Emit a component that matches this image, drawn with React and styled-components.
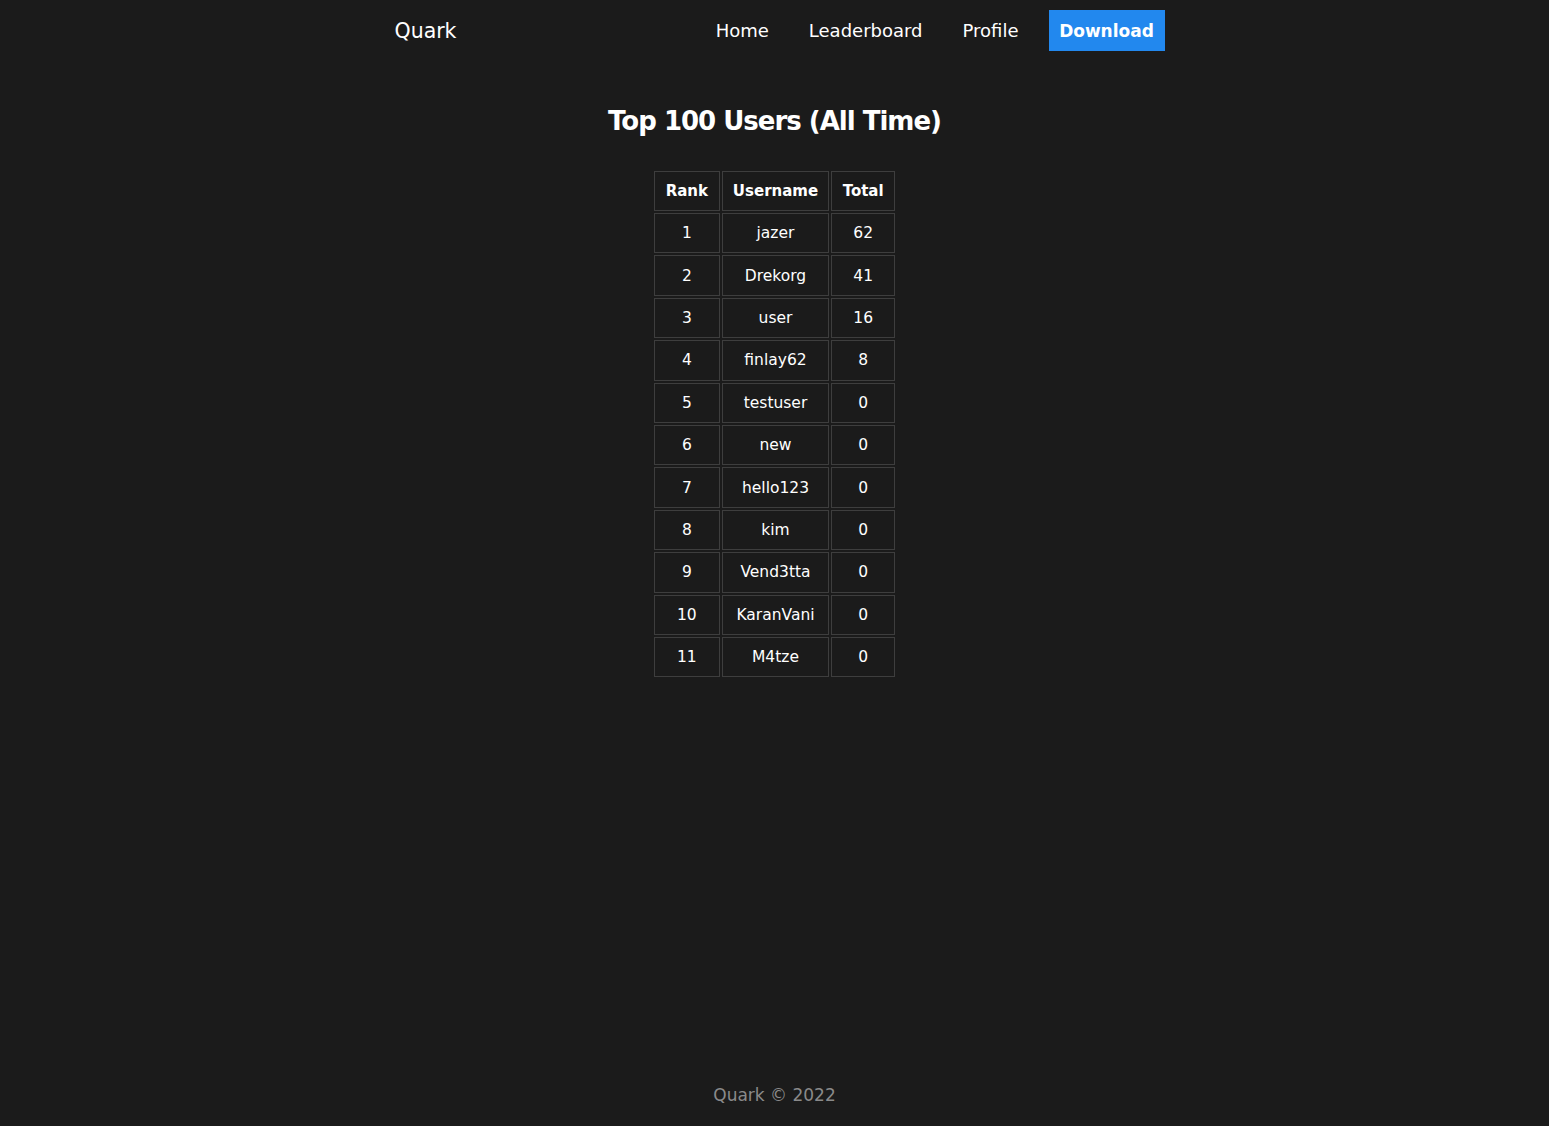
import React from "react";
import styled, { createGlobalStyle } from "styled-components";

const Global = createGlobalStyle`
  html, body { margin: 0; padding: 0; background: #1b1b1b; }
  body { font-family: "DejaVu Sans", "Noto Sans", sans-serif; color: #fff; }
  * { box-sizing: border-box; }
`;

const Page = styled.div`
  min-height: 100vh;
  display: flex;
  flex-direction: column;
`;

const Nav = styled.nav`
  width: 780px;
  margin: 0 auto;
  padding-left: 10px;
  display: flex;
  align-items: center;
  justify-content: space-between;
  height: 61px;
`;

const Brand = styled.a`
  font-size: 20.5px;
  color: #fff;
  text-decoration: none;
`;

const Links = styled.div`
  display: flex;
  align-items: center;
  height: 41px;
`;

const NavLink = styled.a`
  font-size: 18px;
  color: #fff;
  text-decoration: none;
  padding: 0 20px;
`;

const DownloadBtn = styled.a`
  margin-left: 10px;
  height: 41px;
  width: 116px;
  display: flex;
  align-items: center;
  justify-content: center;
  background: #2288ee;
  color: #fff;
  font-weight: bold;
  font-size: 17px;
  text-decoration: none;
`;

const Main = styled.main`
  flex: 1;
  display: flex;
  flex-direction: column;
  align-items: center;
`;

const Title = styled.h1`
  font-size: 26px;
  letter-spacing: -1px;
  font-weight: bold;
  margin: 40px 0 28px;
  line-height: 40px;
`;

const Table = styled.table`
  border-collapse: separate;
  border-spacing: 2px;
`;

const Th = styled.th`
  border: 1px solid #3e3e3e;
  padding: 0 10px;
  height: 40px;
  font-size: 15px;
  font-weight: bold;
  text-align: center;
`;

const Td = styled.td`
  border: 1px solid #3e3e3e;
  padding: 0 10px;
  height: 40.4px;
  font-size: 15.5px;
  text-align: center;
  width: ${(p) => p.$w}px;
`;

const Footer = styled.footer`
  text-align: center;
  color: #8a8a8a;
  font-size: 17px;
  padding: 20px 0 21px;
`;

const rows = [
  ["1", "jazer", "62"],
  ["2", "Drekorg", "41"],
  ["3", "user", "16"],
  ["4", "finlay62", "8"],
  ["5", "testuser", "0"],
  ["6", "new", "0"],
  ["7", "hello123", "0"],
  ["8", "kim", "0"],
  ["9", "Vend3tta", "0"],
  ["10", "KaranVani", "0"],
  ["11", "M4tze", "0"],
];

export default function App() {
  return (
    <Page>
      <Global />
      <Nav>
        <Brand href="#">Quark</Brand>
        <Links>
          <NavLink href="#">Home</NavLink>
          <NavLink href="#">Leaderboard</NavLink>
          <NavLink href="#">Profile</NavLink>
          <DownloadBtn href="#">Download</DownloadBtn>
        </Links>
      </Nav>
      <Main>
        <Title>Top 100 Users (All Time)</Title>
        <Table>
          <thead>
            <tr>
              <Th>Rank</Th>
              <Th>Username</Th>
              <Th>Total</Th>
            </tr>
          </thead>
          <tbody>
            {rows.map((r) => (
              <tr key={r[0]}>
                <Td $w={66}>{r[0]}</Td>
                <Td $w={107}>{r[1]}</Td>
                <Td $w={64}>{r[2]}</Td>
              </tr>
            ))}
          </tbody>
        </Table>
      </Main>
      <Footer>Quark © 2022</Footer>
    </Page>
  );
}
